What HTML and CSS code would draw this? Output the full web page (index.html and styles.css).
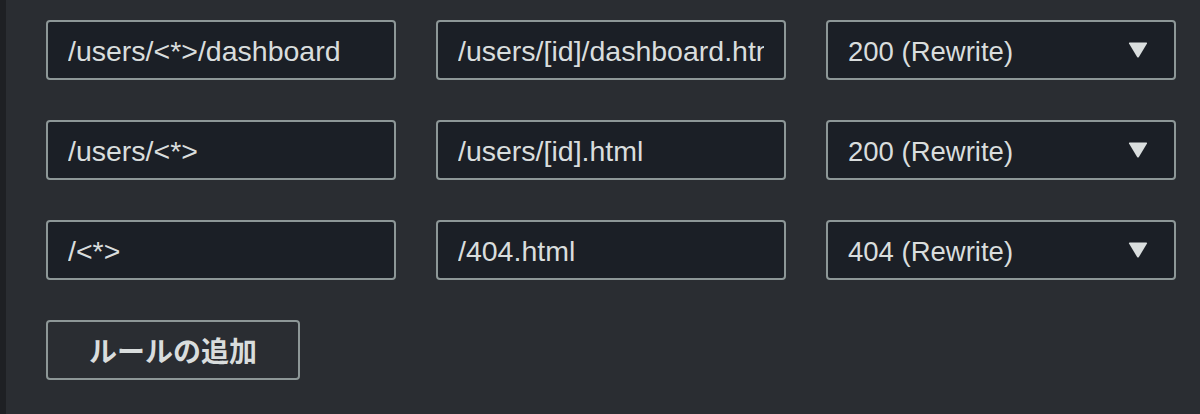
FILE: index.html
```html
<!DOCTYPE html>
<html lang="ja">
<head>
<meta charset="utf-8">
<link rel="stylesheet" href="styles.css">
</head>
<body>
<div class="panel">
  <div class="rules">
    <div class="field"><span class="val">/users/&lt;*&gt;/dashboard</span></div>
    <div class="field"><span class="val">/users/[id]/dashboard.html</span></div>
    <div class="field select"><span class="val">200 (Rewrite)</span><svg class="arrow" width="20" height="16" viewBox="0 0 20 16"><path d="M1 1.5 Q0.5 0.5 1.8 0.5 H18.2 Q19.5 0.5 19 1.5 L10.9 15 Q10 16 9.1 15 Z" fill="#dadede"/></svg></div>

    <div class="field"><span class="val">/users/&lt;*&gt;</span></div>
    <div class="field"><span class="val">/users/[id].html</span></div>
    <div class="field select"><span class="val">200 (Rewrite)</span><svg class="arrow" width="20" height="16" viewBox="0 0 20 16"><path d="M1 1.5 Q0.5 0.5 1.8 0.5 H18.2 Q19.5 0.5 19 1.5 L10.9 15 Q10 16 9.1 15 Z" fill="#dadede"/></svg></div>

    <div class="field"><span class="val">/&lt;*&gt;</span></div>
    <div class="field"><span class="val">/404.html</span></div>
    <div class="field select"><span class="val">404 (Rewrite)</span><svg class="arrow" width="20" height="16" viewBox="0 0 20 16"><path d="M1 1.5 Q0.5 0.5 1.8 0.5 H18.2 Q19.5 0.5 19 1.5 L10.9 15 Q10 16 9.1 15 Z" fill="#dadede"/></svg></div>
  </div>
  <button class="add">ルールの追加</button>
</div>
</body>
</html>
```
FILE: styles.css
```css
html, body {
  margin: 0;
  padding: 0;
  background: #2a2d32;
}
body {
  height: 414px;
  overflow: hidden;
}
.panel {
  height: 414px;
  box-sizing: border-box;
  border-left: 6px solid #1e2024;
  padding: 20px 0 0 40px;
  font-family: "Liberation Sans", "Noto Sans CJK JP", sans-serif;
  color: #d9dddd;
}
.rules {
  display: grid;
  grid-template-columns: 350px 350px 350px;
  grid-auto-rows: 60px;
  column-gap: 40px;
  row-gap: 40px;
}
.field {
  box-sizing: border-box;
  background: #1b1f26;
  border: 2px solid #8d9797;
  border-radius: 4px;
  padding: 3px 20px 0 20px;
  display: flex;
  align-items: center;
  font-size: 28.5px;
  white-space: nowrap;
  overflow: hidden;
}
.val {
  flex: 1 1 auto;
  min-width: 0;
  overflow: hidden;
}
.select {
  font-size: 27.5px;
  padding-right: 26px;
}
.arrow {
  flex: none;
  margin-top: -3px;
}
.add {
  margin-top: 40px;
  width: 254px;
  height: 60px;
  box-sizing: border-box;
  background: transparent;
  border: 2px solid #8d9797;
  border-radius: 4px;
  color: #d9dddd;
  font-family: "Noto Sans CJK JP", sans-serif;
  font-weight: 700;
  font-size: 28px;
  padding: 0;
  display: flex;
  align-items: center;
  justify-content: center;
}
```
